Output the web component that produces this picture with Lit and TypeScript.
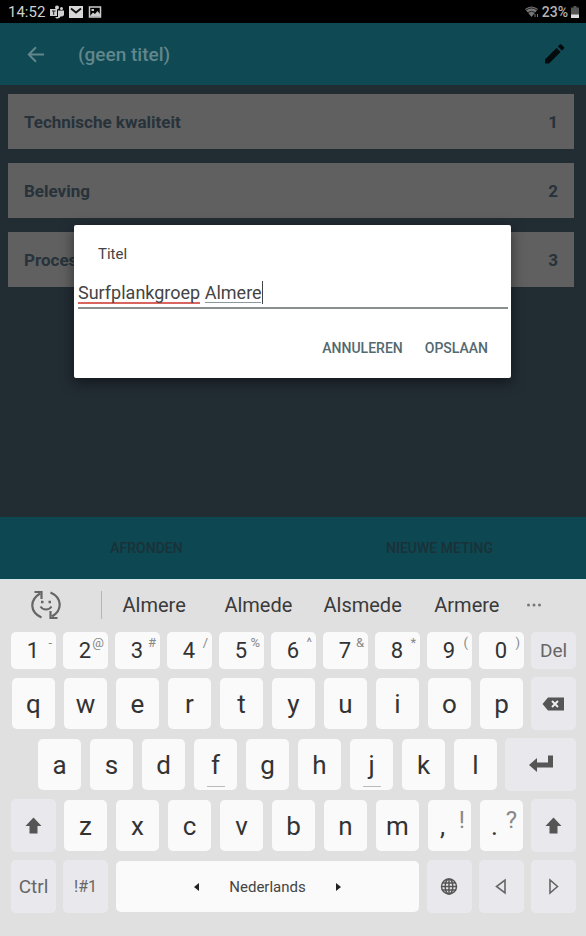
import { LitElement, html, css, svg, nothing } from "lit";
import { customElement, property } from "lit/decorators.js";
import { classMap } from "lit/directives/class-map.js";

type KeyKind = "letter" | "digit" | "mod";

interface KeySpec {
  label?: string;
  alt?: string;
  kind: KeyKind;
  icon?: string;
  name?: string;
  size?: string;
  bump?: boolean;
}

const letters = (s: string): KeySpec[] =>
  s.split("").map((c) => ({ label: c, kind: "letter", bump: c === "f" || c === "j" }));

const digitAlts = ["-", "@", "#", "/", "%", "^", "&", "*", "(", ")"];
const digitRow: KeySpec[] = [
  ..."1234567890".split("").map((d, i): KeySpec => ({ label: d, alt: digitAlts[i], kind: "digit" })),
  { label: "Del", kind: "mod" },
];
const shift: KeySpec = { kind: "mod", icon: "shift", name: "Shift" };
const rows: { cls: string; keys: KeySpec[] }[] = [
  { cls: "digits", keys: digitRow },
  { cls: "top", keys: [...letters("qwertyuiop"), { kind: "mod", icon: "back", name: "Backspace" }] },
  { cls: "home", keys: [...letters("asdfghjkl"), { kind: "mod", icon: "enter", name: "Enter", size: "wide" }] },
  {
    cls: "bottom",
    keys: [
      shift,
      ...letters("zxcvbnm"),
      { label: ",", alt: "!", kind: "letter", size: "punct" },
      { label: ".", alt: "?", kind: "letter", size: "punct" },
      shift,
    ],
  },
  {
    cls: "space",
    keys: [
      { label: "Ctrl", kind: "mod" },
      { label: "!#1", kind: "mod", size: "small" },
      { label: "Nederlands", kind: "letter", size: "bar" },
      { kind: "mod", icon: "globe", name: "Taal" },
      { kind: "mod", icon: "left", name: "Links" },
      { kind: "mod", icon: "right", name: "Rechts" },
    ],
  },
];

const icons: Record<string, unknown> = {
  shift: svg`<path d="M11.500 3.500 19.500 12H15.500V19.500H7.500V12H3.500Z" fill="#555"/>`,
  back: svg`<path d="M6 5.500H22V18.500H6L0.500 12Z" fill="#555"/><path d="m10 9 6 6m0-6-6 6" stroke="#eee" stroke-width="2"/>`,
  enter: svg`<path d="M0 12 8 5V9.500H19V2.500H24V14.500H8V19Z" fill="#555"/>`,
  globe: svg`<g fill="none" stroke="#555" stroke-width="1.500"><circle cx="11" cy="11.500" r="7.500"/><ellipse cx="11" cy="11.500" rx="3.800" ry="7.500"/><path d="M3.500 11.500h15M11 4v15M4.500 8h13M4.500 15h13"/></g>`,
  left: svg`<path d="M15 5V18L6.500 11.500Z" fill="none" stroke="#666" stroke-width="1.600"/>`,
  right: svg`<path d="M8 5V18L15.500 11.500Z" fill="none" stroke="#666" stroke-width="1.600"/>`,
};

@customElement("key-cap")
class KeyCap extends LitElement {
  @property({ attribute: false }) spec!: KeySpec;

  static styles = css`
    :host {
      display: grid;
    }
    .key {
      position: relative;
      display: flex;
      align-items: center;
      justify-content: center;
      min-width: 0;
      padding: 0;
      border: 0;
      border-radius: 5px;
      font: 26px Roboto, sans-serif;
      color: #333;
      background: #fafafa;
    }
    .letter {
      margin: 1px;
    }
    .digit {
      font-size: 22px;
      padding-right: 1px;
    }
    .mod {
      font-size: 19px;
      color: #666;
      background: #e9e9ed;
    }
    .small {
      font-size: 16px;
    }
    .punct {
      padding-right: 14px;
    }
    .bar {
      gap: 30px;
      font-size: 15px;
      color: #444;
    }
    .alt {
      position: absolute;
      top: 3px;
      right: 4px;
      font-size: 13px;
      color: #888;
    }
    .letter .alt {
      top: 6px;
      right: 6px;
      font-size: 24px;
    }
    .bump {
      position: absolute;
      bottom: 3px;
      width: 18px;
      height: 1px;
      background: #bbb;
    }
    .icon {
      width: 24px;
      height: 24px;
    }
    .tri {
      width: 5px;
      height: 8px;
      fill: #222;
    }
  `;

  render() {
    const k = this.spec;
    const bar = k.size === "bar";
    return html`<button
      class=${classMap({ key: true, [k.kind]: true, small: k.size === "small", punct: k.size === "punct", bar })}
      aria-label=${k.name ?? nothing}
    >
      ${bar ? html`<svg class="tri" viewBox="0 0 5 8"><path d="M5 0V8L0 4Z" /></svg>` : nothing}
      ${k.icon ? html`<svg class="icon" viewBox="0 0 24 24">${icons[k.icon]}</svg>` : html`<span>${k.label}</span>`}
      ${bar ? html`<svg class="tri" viewBox="0 0 5 8"><path d="M0 0V8L5 4Z" /></svg>` : nothing}
      ${k.alt ? html`<span class="alt">${k.alt}</span>` : nothing}
      ${k.bump ? html`<span class="bump"></span>` : nothing}
    </button>`;
  }
}

@customElement("soft-keyboard")
class SoftKeyboard extends LitElement {
  static styles = css`
    :host {
      display: block;
      padding: 0 10px 23px 11px;
      background: #e0e0e0;
      border-top: 1px solid #d3e4e7;
      font-family: Roboto, sans-serif;
    }
    .suggestions {
      display: flex;
      align-items: center;
      height: 50px;
      padding: 0 27px 2px 0;
    }
    .tool {
      display: flex;
      align-items: center;
      width: 91px;
      height: 28px;
      padding: 0 0 0 20px;
      border: 0;
      border-right: 1px solid #b5b5b5;
      background: none;
    }
    .emoji {
      width: 30px;
      height: 30px;
    }
    .word {
      flex: 1;
      padding: 0;
      border: 0;
      background: none;
      font: 20px Roboto, sans-serif;
      color: #3a3a3a;
    }
    .more {
      width: 30px;
      height: 30px;
      padding: 0;
      border: 0;
      background: none;
    }
    .dots {
      display: block;
      width: 16px;
      height: 4px;
      margin: 0 auto;
      fill: #777;
    }
    .rows {
      display: grid;
      gap: 8px;
    }
    .row {
      display: grid;
      grid-template-columns: repeat(22, minmax(0, 1fr));
      grid-auto-rows: 53px;
      column-gap: 7px;
    }
    .digits {
      grid-auto-rows: 37px;
    }
    .cell {
      grid-column: span 2;
    }
    .home .cell:first-child {
      grid-column: 2 / span 2;
    }
    .wide {
      grid-column: span 3;
    }
    .bar {
      grid-column: span 12;
    }
  `;

  render() {
    return html`
      <div class="suggestions">
        <button class="tool" aria-label="Emoji">
          <svg class="emoji" viewBox="0 0 30 30" fill="none" stroke="#666" stroke-width="2.200">
            <path d="M10.500 27.500C-1.500 22-1.500 10 9 3.500M3.500 2H10.500V9" />
            <path d="M19.500 2.500C31.500 8 31.500 20 21 26.500M26.500 28H19.500V21" />
            <path d="M9.500 16.500C12 20.500 18 20.500 20.500 16.500" stroke-width="2" />
            <path d="M10 12h2.500M17.500 12h2.500" stroke-width="2.500" />
          </svg>
        </button>
        ${["Almere", "Almede", "Alsmede", "Armere"].map((w) => html`<button class="word">${w}</button>`)}
        <button class="more" aria-label="Meer">
          <svg class="dots" viewBox="0 0 16 4">
            <circle cx="2.500" cy="2" r="1.500" /><circle cx="8" cy="2" r="1.500" /><circle cx="13.500" cy="2" r="1.500" />
          </svg>
        </button>
      </div>
      <div class="rows">
        ${rows.map(
          (r) => html`<div class="row ${r.cls}">
            ${r.keys.map((k) => html`<key-cap class="cell ${k.size ?? ""}" .spec=${k}></key-cap>`)}
          </div>`
        )}
      </div>
    `;
  }
}

@customElement("app-root")
class AppRoot extends LitElement {
  static styles = css`
    :host {
      display: flex;
      flex-direction: column;
      min-height: 100vh;
      font-family: Roboto, sans-serif;
      background: #222c33;
    }
    .status {
      display: flex;
      align-items: center;
      gap: 5px;
      height: 23px;
      padding: 0 7px 0 8px;
      background: #000;
      color: #d0d0d0;
      font-size: 15px;
    }
    .glyph {
      width: 14px;
      height: 14px;
    }
    .battery {
      display: flex;
      align-items: center;
      gap: 3px;
      margin-left: auto;
      font-size: 14px;
      font-weight: 500;
      color: #b4b4b4;
    }
    .cell {
      width: 8px;
      height: 14px;
    }
    .app {
      position: relative;
      display: flex;
      flex: 1;
      flex-direction: column;
    }
    .header {
      display: flex;
      align-items: center;
      height: 62px;
      padding: 0 19px 0 24px;
      background: #0e4954;
    }
    .iconbtn {
      display: flex;
      padding: 0;
      border: 0;
      background: none;
    }
    .i24 {
      width: 24px;
      height: 24px;
    }
    .title {
      flex: 1;
      margin: 0 0 0 30px;
      font-size: 19px;
      font-weight: 500;
      color: #63868c;
    }
    .list {
      display: grid;
      gap: 14px;
      margin: 0;
      padding: 9px 12px 0 8px;
      list-style: none;
    }
    .card {
      display: flex;
      align-items: center;
      justify-content: space-between;
      height: 55px;
      padding: 0 16px;
      background: #606060;
      color: #27323a;
      font-size: 17px;
      font-weight: 700;
    }
    .actions {
      display: flex;
      height: 62px;
      margin-top: auto;
      background: #0d4751;
    }
    .action {
      flex: 1;
      padding: 0;
      border: 0;
      background: none;
      font: 500 14px Roboto, sans-serif;
      color: #1b3138;
    }
    .overlay {
      position: absolute;
      inset: 0;
      display: flex;
      align-items: center;
      padding: 0 75px 0 74px;
    }
    .dialog {
      flex: 1;
      min-width: 0;
      padding: 20px 3px 14px 4px;
      border-radius: 2px;
      background: #fff;
      box-shadow: 0 4px 14px rgba(0, 0, 0, 0.5);
    }
    .label {
      display: block;
      padding-left: 20px;
      font-size: 15px;
      line-height: 18px;
      color: #444;
    }
    .field {
      display: block;
      box-sizing: border-box;
      width: 100%;
      height: 30px;
      margin: 16px 0 0;
      padding: 0;
      border: 0;
      border-bottom: 2px solid #8a8f90;
      border-radius: 0;
      outline: 0;
      font: 18px Roboto, sans-serif;
      color: #444;
      caret-color: transparent;
      background:
        linear-gradient(#d9655f, #d9655f) 0 23px / 122px 2px no-repeat,
        linear-gradient(#8a9a9c, #8a9a9c) 127px 23px / 56px 1px no-repeat,
        linear-gradient(#444, #444) 184px 2px / 1px 23px no-repeat;
    }
    .buttons {
      display: flex;
      justify-content: flex-end;
      gap: 22px;
      padding: 23px 20px 0 0;
    }
    .text {
      height: 32px;
      padding: 0;
      border: 0;
      background: none;
      font: 500 14px Roboto, sans-serif;
      color: #53696e;
    }
  `;

  render() {
    const items = ["Technische kwaliteit", "Beleving", "Proces"];
    return html`
      <div class="status">
        <span>14:52</span>
        <svg class="glyph" viewBox="0 0 14 14" fill="#d0d0d0">
          <circle cx="7" cy="2.500" r="2" /><circle cx="11.500" cy="3.500" r="1.500" />
          <path d="M0 4H7V11H0ZM8 5.500H14V10Q13 12 10.500 11.500Q9.500 14 6.500 13.500L5 12H8Z" />
          <path d="M2 6H5.500M3.700 6V10" stroke="#222" />
        </svg>
        <svg class="glyph" viewBox="0 0 14 14">
          <rect y="1" width="14" height="12" fill="#d8d8d8" />
          <path d="m2 3.500 5 4 5-4" fill="none" stroke="#111" stroke-width="1.800" />
        </svg>
        <svg class="glyph" viewBox="0 0 14 14">
          <rect x="1.500" y="2" width="11" height="10" fill="none" stroke="#ccc" stroke-width="1.500" />
          <path d="m2 11 3-3.500 2 1.500 2.500-3L12 9V11.500H2ZM3.500 4H6V6H3.500Z" fill="#ccc" />
        </svg>
        <span class="battery">
          <svg class="glyph" viewBox="0 0 14 14">
            <path d="M0 4Q6.500-1 13 4L6.500 12Z" fill="#777" />
            <path d="M1 5Q6.500 1 12 5M3 7.500Q6.500 5 10 7.500" fill="none" stroke="#222" />
            <path d="M10 9v3M12.500 9v3" stroke="#777" />
          </svg>
          <span>23%</span>
          <svg class="cell" viewBox="0 0 8 14">
            <path d="M2.500 1H5.500V2.500H8V13H0V2.500H2.500Z" fill="#555" />
            <path d="M0 9.500H8V13H0Z" fill="#ddd" />
          </svg>
        </span>
      </div>
      <main class="app">
        <header class="header">
          <button class="iconbtn" aria-label="Terug">
            <svg class="i24" viewBox="0 0 24 24" fill="none" stroke="#63868c" stroke-width="2">
              <path d="M20 12.500H5.500M12 5.300 4.800 12.500l7.200 7.200" />
            </svg>
          </button>
          <h1 class="title">(geen titel)</h1>
          <button class="iconbtn" aria-label="Bewerken">
            <svg class="i24" viewBox="0 0 24 24" fill="#050a0c">
              <path
                d="M2 17.500V21.500H6L17.500 10 13.500 6ZM20.900 6.700a1.200 1.200 0 0 0 0-1.700L18.500 2.600a1.200 1.200 0 0 0-1.700 0L14.900 4.600 18.900 8.600Z"
              />
            </svg>
          </button>
        </header>
        <ul class="list">
          ${items.map((t, i) => html`<li class="card"><span>${t}</span><span>${i + 1}</span></li>`)}
        </ul>
        <div class="actions">
          <button class="action">AFRONDEN</button>
          <button class="action">NIEUWE METING</button>
        </div>
        <div class="overlay">
          <div class="dialog" role="dialog" aria-labelledby="titel-label">
            <label class="label" id="titel-label" for="titel">Titel</label>
            <input class="field" id="titel" type="text" spellcheck="false" .value=${"Surfplankgroep Almere"} />
            <div class="buttons">
              <button class="text">ANNULEREN</button>
              <button class="text">OPSLAAN</button>
            </div>
          </div>
        </div>
      </main>
      <soft-keyboard></soft-keyboard>
    `;
  }
}
